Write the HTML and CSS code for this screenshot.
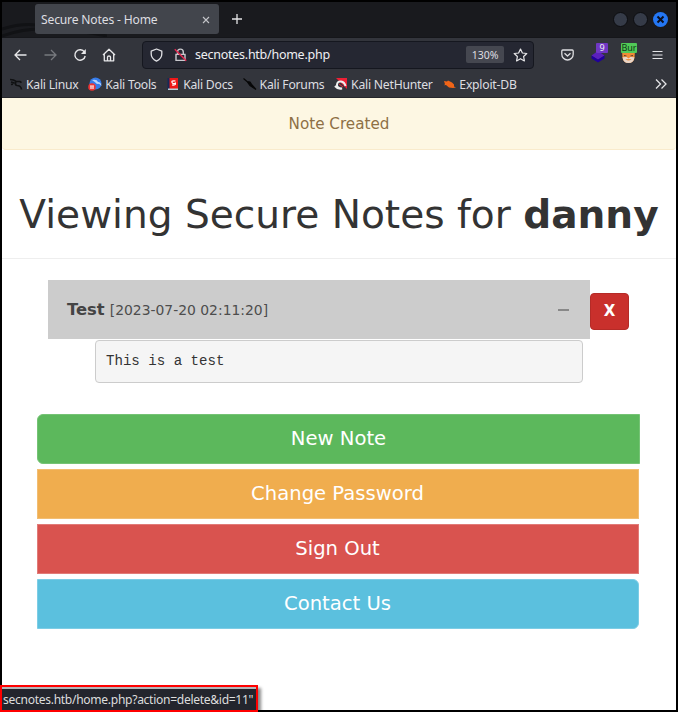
FILE: index.html
```html
<!DOCTYPE html>
<html lang="en">
<head>
<meta charset="utf-8">
<title>Secure Notes - Home</title>
<link rel="stylesheet" href="styles.css">
</head>
<body>
<div class="window">
  <header class="tabs">
    <svg class="wallpaper" width="105" height="14" viewBox="0 0 105 14"><path d="M0 6Q20 0 34 2M0 13Q24 4 52 6T105 13" stroke="#111215" stroke-width="3" fill="none"/></svg>
    <div class="tab"><span class="tab-title">Secure Notes - Home</span>
      <svg class="tab-close" width="8" height="8" viewBox="0 0 8 8"><path d="M1 1l6 6M7 1L1 7" stroke="#c4c5c9" stroke-width="1.1"/></svg>
    </div>
    <svg class="new-tab" width="12" height="12" viewBox="0 0 12 12"><path d="M6 1v10M1 6h10" stroke="#e4e4e6" stroke-width="1.3"/></svg>
    <div class="controls"><i></i><i></i><i class="close"><svg width="15" height="15" viewBox="0 0 15 15"><path d="M4.500 4.500l6 6M10.500 4.500l-6 6" stroke="#0b1020" stroke-width="2"/></svg></i></div>
  </header>
  <nav class="toolbar">
    <svg class="back" width="13" height="12" viewBox="0 0 13 12"><path d="M12.5 6H1M6 1L1 6l5 5" fill="none" stroke="#e8e8ea" stroke-width="1.3"/></svg>
    <svg class="forward" width="13" height="12" viewBox="0 0 13 12"><path d="M.5 6H12M7 1l5 5-5 5" fill="none" stroke="#77797e" stroke-width="1.3"/></svg>
    <svg class="reload" width="14" height="14" viewBox="0 0 14 14"><path d="M11.5 4.2A5.2 5.2 0 1 0 12.2 8" fill="none" stroke="#e8e8ea" stroke-width="1.4"/><path d="M12.8 1v5H8z" fill="#e8e8ea"/></svg>
    <svg class="home" width="14" height="14" viewBox="0 0 14 14"><path d="M1 7l6-5.8L13 7M2.3 6v6.8h9.4V6M5.5 12.5V9q0-1 1.5-1t1.5 1v3.5" fill="none" stroke="#e8e8ea" stroke-width="1.3" stroke-linejoin="round"/></svg>
    <div class="address">
      <svg class="shield" width="13" height="14" viewBox="0 0 13 14"><path d="M6.5 1l5.3 2.1v3c0 3.2-2.2 5.6-5.3 7-3.1-1.4-5.3-3.8-5.3-7v-3z" fill="none" stroke="#e0e0e4" stroke-width="1.3" stroke-linejoin="round"/></svg>
      <svg class="lock" width="13" height="14" viewBox="0 0 13 14"><path d="M3.5 6V4a2.9 2.9 0 0 1 5.8 0v2M2 6.4h9v6H2z" fill="none" stroke="#c9c9ce" stroke-width="1.4"/><path d="M.8 1.2l11.4 11.6" stroke="#e22850" stroke-width="1.5"/></svg>
      <span class="url">secnotes.htb/home.php</span>
      <span class="zoom">130%</span>
      <svg class="star" width="15" height="14" viewBox="0 0 15 14"><path d="M7.5 1l1.9 4 4.4.5-3.2 3 .8 4.4-3.9-2.2-3.9 2.2.8-4.4-3.2-3 4.4-.5z" fill="none" stroke="#e8e8ea" stroke-width="1.2" stroke-linejoin="round"/></svg>
    </div>
    <svg class="pocket" width="13" height="12" viewBox="0 0 13 12"><path d="M1.8 1h9.4q1 0 1 1v3.3a5.7 5.7 0 0 1-11.4 0V2q0-1 1-1zM3.5 4.3l3 2.8 3-2.8" fill="none" stroke="#dedee1" stroke-width="1.3" stroke-linejoin="round"/></svg>
    <div class="ext ext-layers"><svg width="17" height="16" viewBox="0 0 17 16"><path d="M1.500 8.500L8 4l6.500 4.500L8 13z" fill="#5b20bd"/><path d="M1.500 8.500L8 12.500l6.500-4v3L8 15.500l-6.500-4z" fill="#21009c"/></svg><b>9</b></div>
    <div class="ext ext-fox"><svg width="17" height="17" viewBox="0 0 17 17"><path d="M2 3l3 2h7l3-2-.5 8q-.8 5-6 5t-6-5z" fill="#f08b35"/><path d="M2.600 10q2 .5 3.400-.5l2.500 2 2.500-2q1.400 1 3.400.5-.4 6-5.900 6t-5.900-6z" fill="#e9d5c8"/><path d="M4 8.500l2.500.5M13 8.500l-2.500.5" stroke="#5c3b30" fill="none"/><path d="M5.500 12h6q-3 3-6 0z" fill="#ee9140"/></svg><b>Bur</b></div>
    <svg class="menu" width="11" height="10" viewBox="0 0 11 10"><path d="M.5 1.500h10M.5 5h10M.5 8.500h10" stroke="#e4e4e7" stroke-width="1.2"/></svg>
  </nav>
  <div class="bookmarks">
    <span class="mark"><svg width="14" height="14" viewBox="0 0 14 14"><path d="M1 2.500q4 0 6 1.800l4 .2 1.500 1.200M2 5q2 .3 3.500 1.200M2 7.500l2-.3M7 4.500Q5.500 8 8 8.500q4 0 4.500 4" fill="none" stroke="#101113" stroke-width="1.700"/></svg>Kali Linux</span>
    <span class="mark"><svg width="14" height="14" viewBox="0 0 14 14"><circle cx="7.500" cy="6.500" r="6" fill="#367ceb"/><path d="M4 3q5-1 6 2 3 0 3.500 4-2.500-3-4.500-2-2-2-5-4z" fill="#b9d4fc"/><circle cx="4" cy="10" r="3.800" fill="#eb3434"/><path d="M3 8v4M5 8v4M2 9.200h4M2 11h4" stroke="#fff" stroke-width=".7"/></svg>Kali Tools</span>
    <span class="mark"><svg width="14" height="14" viewBox="0 0 14 14"><path d="M3 1h9v12H3z" fill="#ef1818"/><path d="M1.500 1h2v12h-2z" fill="#172858"/><path d="M2 11.500h10V13H2z" fill="#b8d0d8"/><path d="M9.500 4Q5 3.500 6 5.500t3.500.5Q10 8.500 6 8" stroke="#fff" fill="none" stroke-width="1.100"/></svg>Kali Docs</span>
    <span class="mark"><svg width="14" height="14" viewBox="0 0 14 14"><path d="M.5 1.500l3.500 3 3 .5 2 3 4 4.500-6-4-3-4z" fill="#070708" stroke="#070708" stroke-width="1.200"/></svg>Kali Forums</span>
    <span class="mark"><svg width="14" height="14" viewBox="0 0 14 14"><path d="M2 1h11v11z" fill="#ed2035"/><path d="M11.500 9Q10.500 5 7 4.500T3 7.500t5 4Q4 12.500 1 9" fill="none" stroke="#eee" stroke-width="2"/><path d="M5 7l4 3" stroke="#ed2035"/></svg>Kali NetHunter</span>
    <span class="mark"><svg width="14" height="14" viewBox="0 0 14 14"><path d="M2 4l3 .5 1-1 4 2 2 2v2l2 1-3 .5-4-.5-3-2.500-2 .2 1-1z" fill="#f06418"/></svg>Exploit-DB</span>
    <svg class="more" width="12" height="12" viewBox="0 0 12 12"><path d="M1 1.500L5.500 6 1 10.500M6.500 1.500L11 6l-4.500 4.500" fill="none" stroke="#e4e4e7" stroke-width="1.300"/></svg>
  </div>
  <main>
    <div class="alert">Note Created</div>
    <h1>Viewing Secure Notes for <b>danny</b></h1>
    <section class="note">
      <div class="note-row">
        <div class="note-head"><strong>Test</strong><small>[2023-07-20 02:11:20]</small><span class="minus"></span></div>
        <button class="delete">X</button>
      </div>
      <div class="panel"><pre>This is a test</pre></div>
    </section>
    <div class="actions">
      <a class="btn new">New Note</a>
      <a class="btn password">Change Password</a>
      <a class="btn signout">Sign Out</a>
      <a class="btn contact">Contact Us</a>
    </div>
  </main>
  <div class="status">secnotes.htb/home.php?action=delete&amp;id=11"</div>
</div>
</body>
</html>
```
FILE: styles.css
```css
* { box-sizing: border-box; }
body { margin: 0; font-family: "DejaVu Sans", sans-serif; }
svg { display: block; flex: none; }
.window { position: relative; width: 678px; height: 712px; border: 2px solid #000; background: #fff; }
.tabs, .toolbar, .bookmarks { display: flex; align-items: center; font-family: "Noto Sans", sans-serif; color: #dedee1; background: #33353c; white-space: nowrap; }
.tabs { position: relative; height: 36px; background: #191a1e; padding: 0 7px 1px 33px; border-bottom: 1px solid #15161a; }
.wallpaper { position: absolute; left: 0; bottom: 0; }
.tab { position: relative; display: flex; align-items: center; width: 184px; height: 30px; padding: 1px 9px 0 6px; background: #42454c; border-radius: 3px; font-size: 12.1px; letter-spacing: -.16px; }
.tab-close { margin-left: auto; }
.new-tab { margin-left: 12px; }
.controls { display: flex; gap: 5px; margin-left: auto; margin-right: 1px; }
.controls i { width: 15px; height: 15px; border-radius: 50%; background: #353b48; border: 1px solid #0c0d10; }
.controls .close { background: #2477f4; border: 0; }
.toolbar { height: 33px; padding: 0 13px 0 12px; }
.forward { margin-left: 17px; }
.reload { margin-left: 16px; }
.home { margin-left: 15px; }
.address { display: flex; align-items: center; width: 392px; height: 28px; margin-left: 26px; padding: 0 5px 0 7px; background: #252732; border: 1px solid #15171f; border-radius: 4px; }
.lock { margin-left: 11px; }
.url { margin-left: 8px; font-size: 12.5px; letter-spacing: -.26px; color: #f0f0f2; }
.zoom { width: 38px; height: 17px; margin-left: auto; border-radius: 2px; background: #454750; font-size: 10.5px; line-height: 18px; text-align: center; }
.star { margin-left: 9px; }
.pocket { margin-left: 27px; }
.ext { position: relative; width: 17px; height: 16px; }
.ext-layers { margin-left: 16px; }
.ext-fox { margin-left: 13px; }
.ext b { position: absolute; left: 6px; top: -4px; width: 12px; height: 10px; border-radius: 1px; background: #7037c4; color: #eee; font: 9px/10px "Noto Sans", sans-serif; text-align: center; }
.ext-fox b { left: 1px; width: 16px; background: #51c957; color: #103814; }
.menu { margin-left: auto; }
.bookmarks { height: 27px; padding: 0 9px 0 7px; border-bottom: 1px solid #25262b; font-size: 12.2px; letter-spacing: -.23px; }
.mark { display: flex; align-items: center; gap: 3px; margin-right: 9.700px; }
.more { margin-left: auto; }
.alert { height: 52px; background: #fdf7e3; border-bottom: 1px solid #f9ebcc; border-radius: 0 0 4px 4px; color: #8e7045; font-size: 15.200px; line-height: 53px; text-align: center; }
h1 { height: 109px; margin: 0; padding-top: 41px; border-bottom: 1px solid #eee; color: #333; font-size: 39.100px; font-weight: 400; line-height: 47px; text-align: center; white-space: nowrap; }
.note { margin: 21px 0 0 46px; }
.note-row { display: flex; align-items: center; }
.note-head { display: flex; align-items: baseline; width: 542px; height: 59px; padding: 0 21px 0 19px; line-height: 59px; background: #ccc; color: #444; }
.note-head strong { font-size: 16.400px; }
.note-head small { font-size: 13.900px; margin-left: 5px; color: #4d4d4d; }
.minus { width: 11px; height: 2px; margin-left: auto; align-self: center; margin-top: 1px; background: #888; }
.delete { width: 39px; height: 37px; margin-top: 4px; padding: 0; border: 1px solid #b52b27; border-radius: 4px; background: #c9302c; color: #fff; font: bold 15px/35px "DejaVu Sans", sans-serif; }
.panel { width: 532px; height: 54px; margin-left: 26px; padding: 1px 0 0 21px; }
pre { width: 488px; height: 43px; margin: 0; padding: 0 10px; border: 1px solid #ccc; border-radius: 4px; background: #f5f5f5; color: #333; font: 14.1px/41px "Liberation Mono", monospace; }
.actions { display: flex; flex-direction: column; gap: 5px; width: 602px; margin: 21px 0 0 34.500px; }
.btn { height: 50px; border: 1px solid; color: #fff; font-size: 19.600px; line-height: 48px; text-align: center; }
.new { width: 603px; margin-left: .5px; background: #5cb85c; border-color: #75c375; border-radius: 6px 0 0 6px; }
.password { background: #f0ad4e; border-color: #f2bd72; }
.signout { background: #d9534f; border-color: #e17b78; }
.contact { background: #5bc0de; border-color: #7dcde5; border-radius: 0 6px 6px 0; }
.status { position: absolute; left: -2px; bottom: -2px; width: 258px; height: 27px; padding-left: 1px; border: 2px solid #f00; background: #23252d; box-shadow: inset 0 2px #b4b5b8, 3px 3px 3px #0007; color: #ddd; font: 12.1px/26px "Noto Sans", sans-serif; letter-spacing: -.31px; white-space: nowrap; }
```
